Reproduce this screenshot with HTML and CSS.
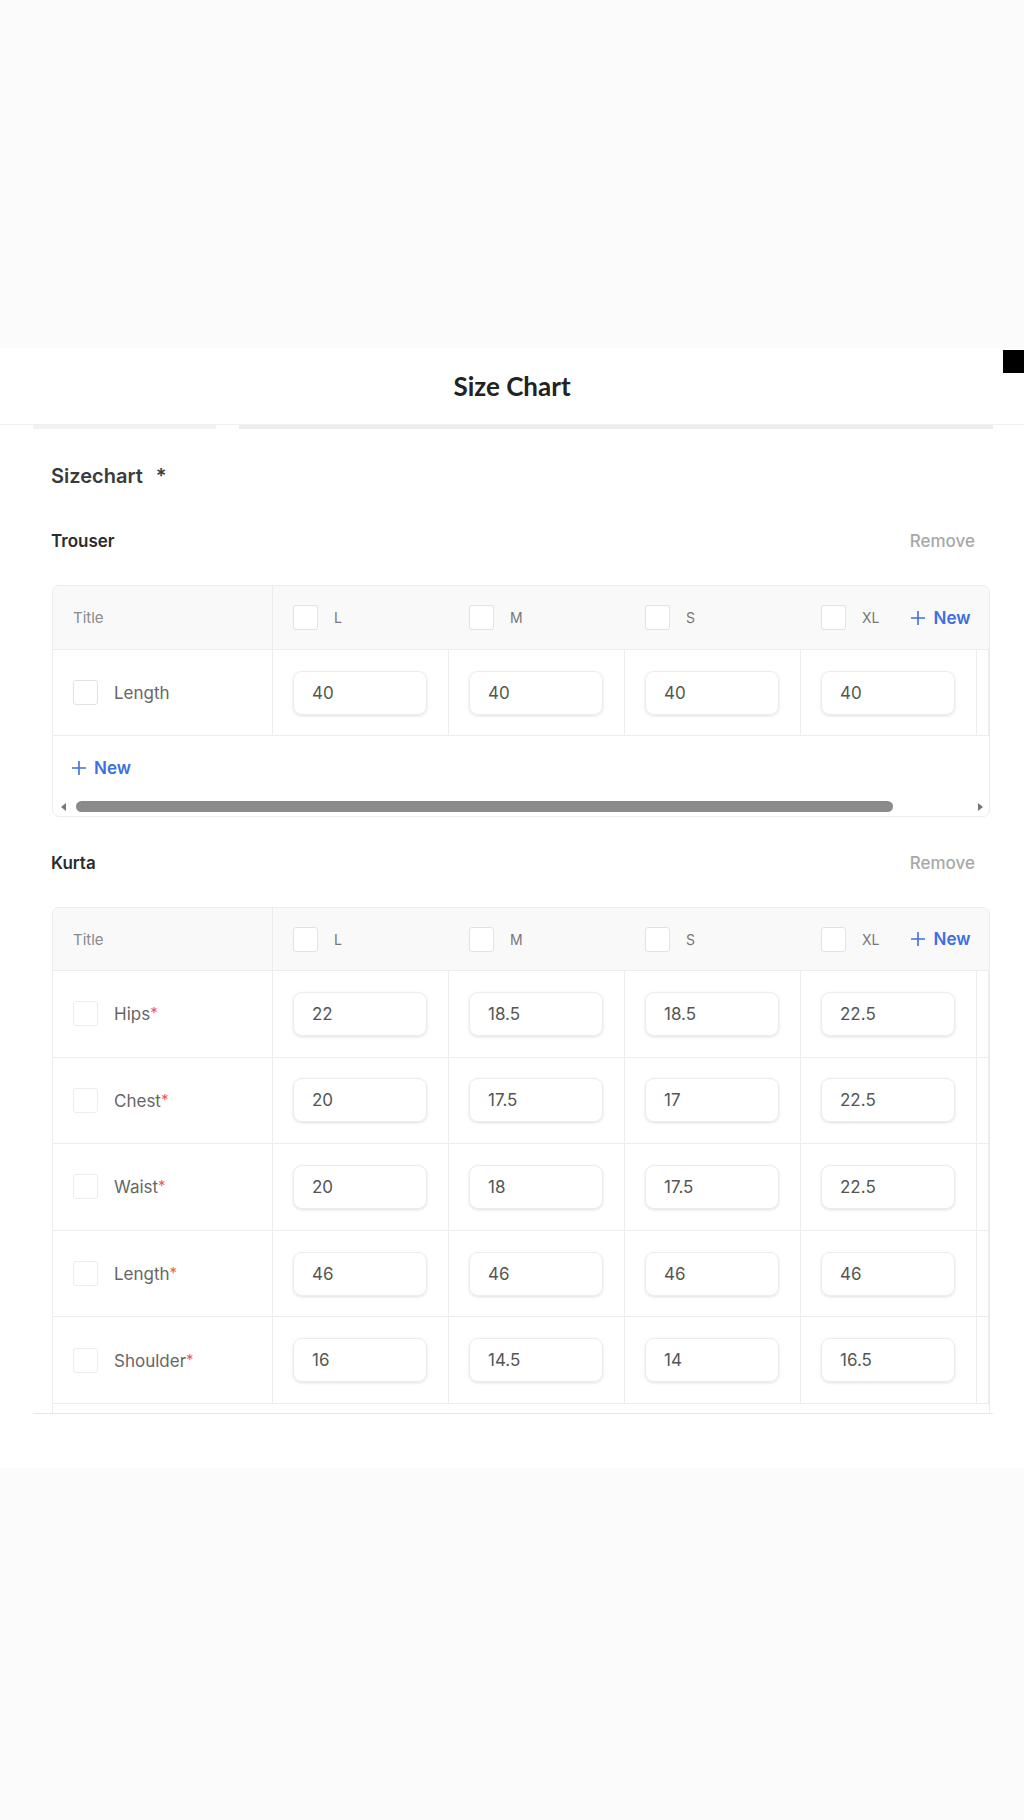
FILE: index.html
```html
<!DOCTYPE html>
<html lang="en">

<head>
    <meta charset="UTF-8">
    <meta name="viewport" content="width=device-width, initial-scale=1.0">
    <title>Size Chart</title>
    <link rel="stylesheet" href="styles.css">
</head>

<body>
    <div class="top-band"></div>
    <div class="sheet">
        <div class="sheet-head">
            <h1>Size Chart</h1>
            <div class="close-tab"></div>
        </div>
        <div class="head-rule">
            <span class="rule-a"></span>
            <span class="rule-b"></span>
        </div>

        <div class="content">
            <div class="field-label">Sizechart <span class="req">*</span></div>

            <!-- trouser -->
            <div class="group-head">
                <span class="group-name">Trouser</span>
                <span class="remove">Remove</span>
            </div>
            <div class="chart">
                <div class="row head">
                    <div class="cell title-cell">Title</div>
                    <div class="cell size-cell"><span class="box"></span><span class="size">L</span></div>
                    <div class="cell size-cell"><span class="box"></span><span class="size">M</span></div>
                    <div class="cell size-cell"><span class="box"></span><span class="size">S</span></div>
                    <div class="cell size-cell last-size"><span class="box"></span><span class="size">XL</span>
                        <span class="new">
                            <svg width="16" height="16" viewBox="0 0 16 16"><path d="M8 1v14M1 8h14" stroke="#3d6fe3" stroke-width="1.6" fill="none"/></svg>
                            New
                        </span>
                    </div>
                    <div class="cell rest"></div>
                </div>
                <div class="row">
                    <div class="cell title-cell"><span class="box"></span><span class="label">Length</span></div>
                    <div class="cell"><div class="input">40</div></div>
                    <div class="cell"><div class="input">40</div></div>
                    <div class="cell"><div class="input">40</div></div>
                    <div class="cell"><div class="input">40</div></div>
                    <div class="cell rest"></div>
                </div>
                <div class="add-row">
                    <span class="new">
                        <svg width="16" height="16" viewBox="0 0 16 16"><path d="M8 1v14M1 8h14" stroke="#3d6fe3" stroke-width="1.6" fill="none"/></svg>
                        New
                    </span>
                </div>
                <div class="scrollbar">
                    <span class="arrow left"></span>
                    <span class="thumb"></span>
                    <span class="arrow right"></span>
                </div>
            </div>

            <!-- kurta -->
            <div class="group-head">
                <span class="group-name">Kurta</span>
                <span class="remove">Remove</span>
            </div>
            <div class="chart cut">
                <div class="row head">
                    <div class="cell title-cell">Title</div>
                    <div class="cell size-cell"><span class="box"></span><span class="size">L</span></div>
                    <div class="cell size-cell"><span class="box"></span><span class="size">M</span></div>
                    <div class="cell size-cell"><span class="box"></span><span class="size">S</span></div>
                    <div class="cell size-cell last-size"><span class="box"></span><span class="size">XL</span>
                        <span class="new">
                            <svg width="16" height="16" viewBox="0 0 16 16"><path d="M8 1v14M1 8h14" stroke="#3d6fe3" stroke-width="1.6" fill="none"/></svg>
                            New
                        </span>
                    </div>
                    <div class="cell rest"></div>
                </div>
                <div class="row">
                    <div class="cell title-cell"><span class="box light"></span><span class="label">Hips<span class="star">*</span></span></div>
                    <div class="cell"><div class="input">22</div></div>
                    <div class="cell"><div class="input">18.5</div></div>
                    <div class="cell"><div class="input">18.5</div></div>
                    <div class="cell"><div class="input">22.5</div></div>
                    <div class="cell rest"></div>
                </div>
                <div class="row">
                    <div class="cell title-cell"><span class="box light"></span><span class="label">Chest<span class="star">*</span></span></div>
                    <div class="cell"><div class="input">20</div></div>
                    <div class="cell"><div class="input">17.5</div></div>
                    <div class="cell"><div class="input">17</div></div>
                    <div class="cell"><div class="input">22.5</div></div>
                    <div class="cell rest"></div>
                </div>
                <div class="row">
                    <div class="cell title-cell"><span class="box light"></span><span class="label">Waist<span class="star">*</span></span></div>
                    <div class="cell"><div class="input">20</div></div>
                    <div class="cell"><div class="input">18</div></div>
                    <div class="cell"><div class="input">17.5</div></div>
                    <div class="cell"><div class="input">22.5</div></div>
                    <div class="cell rest"></div>
                </div>
                <div class="row">
                    <div class="cell title-cell"><span class="box light"></span><span class="label">Length<span class="star">*</span></span></div>
                    <div class="cell"><div class="input">46</div></div>
                    <div class="cell"><div class="input">46</div></div>
                    <div class="cell"><div class="input">46</div></div>
                    <div class="cell"><div class="input">46</div></div>
                    <div class="cell rest"></div>
                </div>
                <div class="row">
                    <div class="cell title-cell"><span class="box light"></span><span class="label">Shoulder<span class="star">*</span></span></div>
                    <div class="cell"><div class="input">16</div></div>
                    <div class="cell"><div class="input">14.5</div></div>
                    <div class="cell"><div class="input">14</div></div>
                    <div class="cell"><div class="input">16.5</div></div>
                    <div class="cell rest"></div>
                </div>
            </div>
        </div>
        <div class="bottom-rule"></div>
    </div>
</body>

</html>
```

FILE: styles.css
```css
html,
body {
    padding: 0;
    margin: 0;
}

body {
    background-color: #fcfbfc;
    font-family: Inter, "Liberation Sans", sans-serif;
    color: #333;
}

.top-band {
    height: 348px;
}

.sheet {
    background-color: #fff;
    height: 1120px;
}

.sheet-head {
    position: relative;
    height: 76px;
    display: flex;
    align-items: center;
    justify-content: center;
    border-bottom: 1px solid #f0f0f0;
}

.sheet-head h1 {
    margin: 0;
    font-family: Lato, "Liberation Sans", sans-serif;
    font-weight: 700;
    font-size: 26px;
    color: #222;
}

.close-tab {
    position: absolute;
    top: 2px;
    right: 0;
    width: 21px;
    height: 23px;
    background-color: #000;
}

.head-rule {
    display: flex;
    height: 4px;
    padding-left: 33px;
}

.rule-a {
    width: 183px;
    background-color: #f2f2f2;
}

.rule-b {
    width: 754px;
    margin-left: 23px;
    background-color: #ececec;
}

.content {
    padding: 33px 0 0 52px;
}

.field-label {
    height: 28px;
    line-height: 28px;
    font-size: 20px;
    font-weight: 600;
    color: #3a3a3a;
    margin-left: -1px;
}

.req {
    margin-left: 8px;
}

.group-head {
    display: flex;
    justify-content: space-between;
    align-items: center;
    width: 924px;
    height: 24px;
    margin-top: 39px;
    margin-left: -1px;
}

.chart + .group-head {
    margin-top: 34px;
}

.group-name {
    font-size: 17px;
    font-weight: 600;
    color: #2c2c2c;
}

.remove {
    font-size: 17px;
    font-weight: 500;
    color: #a8a8a8;
}

.chart {
    box-sizing: border-box;
    width: 938px;
    margin-top: 32px;
    border: 1px solid #ececec;
    border-radius: 7px;
    overflow: hidden;
}

.chart.cut {
    height: 506px;
    border-radius: 7px 7px 0 0;
    border-bottom: none;
}

.row {
    display: grid;
    grid-template-columns: 220px repeat(4, 176px) 1fr;
    height: 86px;
    border-bottom: 1px solid #ececec;
    box-sizing: border-box;
}

.chart.cut .row {
    height: 86.6px;
}

.row.head {
    height: 64px;
    background-color: #f9f9f9;
}

.chart.cut .row.head {
    height: 63px;
}

.cell {
    box-sizing: border-box;
    display: flex;
    align-items: center;
    padding-left: 20px;
    border-right: 1px solid #ececec;
}

.row.head .size-cell {
    border-right: none;
}

.row.head .rest {
    border-right: none;
}

.rest {
    padding: 0;
}

.title-cell {
    font-size: 15px;
    color: #8a8a8a;
}

.box {
    box-sizing: border-box;
    width: 25px;
    height: 25px;
    border: 1px solid #e2e2e2;
    border-radius: 3px;
    background-color: #fff;
    flex-shrink: 0;
}

.box.light {
    border-color: #ececec;
}

.size {
    margin-left: 16px;
    font-size: 14px;
    color: #777;
}

.label {
    margin-left: 16px;
    font-size: 17px;
    color: #666;
}

.star {
    color: #ee5a5a;
    font-size: 15px;
    vertical-align: 2px;
}

.input {
    box-sizing: border-box;
    width: 134px;
    height: 44px;
    line-height: 42px;
    padding-left: 18px;
    border: 1px solid #ececec;
    border-radius: 9px;
    box-shadow: 0 1px 3px rgba(0, 0, 0, 0.13);
    font-size: 17px;
    color: #555;
}

.new {
    display: flex;
    align-items: center;
    gap: 7px;
    font-size: 17px;
    font-weight: 600;
    color: #3d6fe3;
}

.last-size .new {
    margin-left: 31px;
}

.add-row {
    height: 63px;
    display: flex;
    align-items: center;
    padding-left: 18px;
}

.scrollbar {
    display: flex;
    align-items: center;
    height: 15px;
    padding: 0 6px 2px 8px;
}

.arrow {
    width: 0;
    height: 0;
    border-top: 4px solid transparent;
    border-bottom: 4px solid transparent;
}

.arrow.left {
    border-right: 5px solid #777;
}

.arrow.right {
    margin-left: auto;
    border-left: 5px solid #777;
}

.thumb {
    width: 817px;
    height: 11px;
    margin-left: 10px;
    border-radius: 6px;
    background-color: #8a8a8a;
}

.bottom-rule {
    height: 1px;
    width: 960px;
    margin-left: 33px;
    background-color: #f1e4e4;
}
```
